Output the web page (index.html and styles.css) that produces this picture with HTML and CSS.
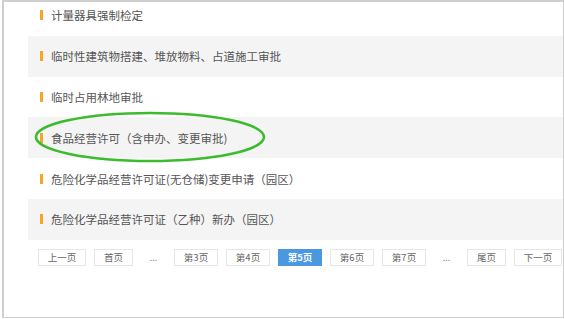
FILE: index.html
```html
<!DOCTYPE html>
<html lang="zh-CN">
<head>
    <meta charset="UTF-8">
    <title>事项列表</title>
    <link rel="stylesheet" href="styles.css">
</head>
<body>
    <div class="frame">
        <!-- Item list -->
        <ul class="item-list">
            <li class="item first">计量器具强制检定</li>
            <li class="item">临时性建筑物搭建、堆放物料、占道施工审批</li>
            <li class="item">临时占用林地审批</li>
            <li class="item">食品经营许可（含申办、变更审批)</li>
            <li class="item">危险化学品经营许可证(无仓储)变更申请（园区）</li>
            <li class="item">危险化学品经营许可证（乙种）新办（园区）</li>
        </ul>

        <!-- Pager -->
        <div class="pager">
            <a class="page wide">上一页</a>
            <a class="page short">首页</a>
            <span class="dots">...</span>
            <a class="page">第3页</a>
            <a class="page">第4页</a>
            <a class="page active">第5页</a>
            <a class="page">第6页</a>
            <a class="page">第7页</a>
            <span class="dots">...</span>
            <a class="page short">尾页</a>
            <a class="page wide">下一页</a>
        </div>

        <!-- hand drawn highlight -->
        <svg class="mark" width="236" height="56" viewBox="0 0 236 56">
            <ellipse cx="118" cy="28" rx="114" ry="24" fill="none" stroke="#3dbb2f" stroke-width="2.6"/>
        </svg>
    </div>
</body>
</html>
```

FILE: styles.css
```css
/* General */
body {
    margin: 0;
    padding: 0;
    background: #fff;
    font-family: 'Noto Sans CJK SC', 'Microsoft YaHei', sans-serif;
    overflow: hidden;
}

.frame {
    position: relative;
    box-sizing: border-box;
    width: 562px;
    height: 318px;
    margin-left: 2px;
    border: 1px solid #cfcfcf;
    border-top-width: 2px;
    border-left-width: 2px;
    overflow: hidden;
}

/* List */
.item-list {
    list-style: none;
    margin: -7px 0 0 24px;
    padding: 0;
}

.item {
    display: flex;
    align-items: center;
    height: 40.8px;
    padding-left: 12px;
    font-size: 11.5px;
    color: #555;
}

.item:nth-child(even) {
    background: #f4f4f4;
}

.item::before {
    content: "";
    width: 3px;
    height: 10px;
    margin-right: 8px;
    background: #f5a623;
}

/* Pager */
.pager {
    display: flex;
    align-items: center;
    gap: 7px;
    margin: 9px 0 0 34px;
}

.page {
    box-sizing: border-box;
    width: 44px;
    height: 17px;
    line-height: 15px;
    border: 1px solid #e6e6e6;
    font-size: 9.5px;
    color: #666;
    text-align: center;
}

.page + .page {
    margin-left: 1px;
}

.page.wide {
    width: 48px;
}

.page.short {
    width: 39px;
}

.page.active {
    background: #4a98e0;
    border-color: #4a98e0;
    color: #fff;
    font-weight: bold;
}

.dots {
    width: 27px;
    font-size: 9px;
    color: #888;
    text-align: center;
}

/* Annotation */
.mark {
    position: absolute;
    left: 28px;
    top: 107px;
}
```
